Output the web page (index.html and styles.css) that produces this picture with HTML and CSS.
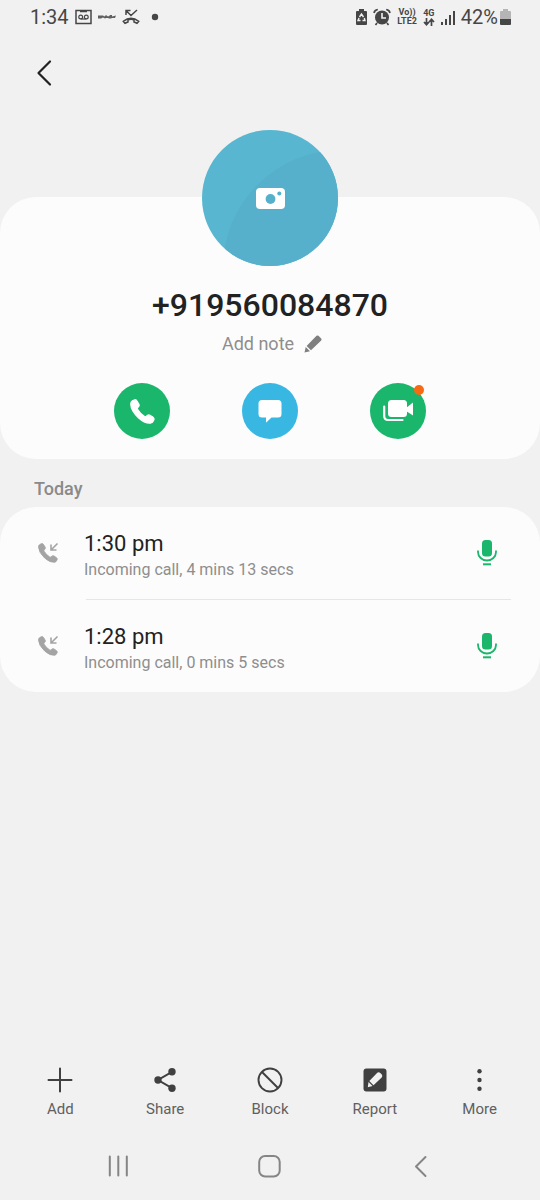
FILE: index.html
```html
<!DOCTYPE html>
<html lang="en">
<head>
<meta charset="utf-8">
<meta name="viewport" content="width=device-width, initial-scale=1">
<title>Call details</title>
<link rel="stylesheet" href="styles.css">
</head>
<body>
<svg class="defs" aria-hidden="true">
  <symbol id="handset" viewBox="0 0 24 24"><path d="M2.200 1.700 4 .9Q5.500.2 6.400 1.500L8.500 4.900Q9.300 6.200 8.200 7.400L7.500 8.200Q6.800 9 7.300 9.900 9.600 14 14 16.700 15 17.300 15.700 16.600L16.600 15.800Q17.900 14.800 19.200 15.600L22.200 17.600Q23.600 18.700 22.900 20.200L22.100 21.500Q21.400 22.800 20 23.100 14.500 23.900 8 18 .8 11 .7 5 .6 2.500 2.200 1.700Z" fill="currentColor" stroke="currentColor" stroke-width="1.100" stroke-linejoin="round"/></symbol>
  <symbol id="incoming" viewBox="0 0 22 22"><svg x="1" y="1" width="20" height="20" viewBox="0 0 24 24"><path d="M2.200 1.700 4 .9Q5.500.2 6.400 1.500L8.500 4.900Q9.300 6.200 8.200 7.400L7.500 8.200Q6.800 9 7.300 9.900 9.600 14 14 16.700 15 17.300 15.700 16.600L16.600 15.800Q17.900 14.800 19.200 15.600L22.200 17.600Q23.600 18.700 22.900 20.200L22.100 21.500Q21.400 22.800 20 23.100 14.500 23.900 8 18 .8 11 .7 5 .6 2.500 2.200 1.700Z" fill="currentColor" stroke="currentColor" stroke-width="1.100" stroke-linejoin="round"/></svg><path d="M20.500 1.500 14 8M14 2.500V8H19.500" fill="none" stroke="currentColor" stroke-width="1.600"/></symbol>
  <symbol id="mic" viewBox="0 0 20 26"><rect x="5" y="0" width="10" height="16.500" rx="3.500" fill="currentColor"/><path d="M1 10.500V12A9 8.500 0 0 0 19 12V10.500" fill="none" stroke="currentColor" stroke-width="1.800"/><path d="M6 24.300H14" stroke="currentColor" stroke-width="2"/></symbol>
</svg>
<div class="screen">
  <div class="status">
    <div class="status-group">
      <span class="clock">1:34</span>
      <svg width="17" height="16" viewBox="0 0 17 16" fill="none" stroke="currentColor"><rect x="1" y="1.500" width="15" height="13" stroke-width="1.500"/><path d="M5 2.500H12" stroke-width="1.500"/><circle cx="5.700" cy="8" r="1.900" stroke-width="1.200"/><circle cx="11.300" cy="8" r="1.900" stroke-width="1.200"/><path d="M5.700 10H11.300" stroke-width="1.200"/></svg>
      <svg width="18" height="6" viewBox="0 0 18 6" fill="currentColor"><path d="M0 1.500H5L6.500 2.500 8 1 9.500 2.200H11L12 1H14V2.500L18 1.500 17 4H14L13 4.500H11L10 4H8L7 4.500 5 3.500 3 4.500H0Z" opacity=".85"/></svg>
      <svg width="18" height="16" viewBox="0 0 18 16" fill="none" stroke="currentColor" stroke-width="1.500"><path d="M4 1.500 9 6.500 15 1M4 6V1.500H8.500"/><path d="M1.300 12.300Q9 6 16.700 12.300L15 14.300 12 13V10.700Q9 9.700 6 10.700V13L3 14.300Z"/></svg>
      <svg width="8" height="8" viewBox="0 0 8 8"><circle cx="4" cy="4" r="3.200" fill="currentColor"/></svg>
    </div>
    <div class="status-group">
      <svg width="11" height="16" viewBox="0 0 11 16"><path d="M3 0H8V2H10Q11 2 11 3V15Q11 16 10 16H1Q0 16 0 15V3Q0 2 1 2H3Z" fill="currentColor"/><path d="M3.500 8 5.500 5 7.500 8M8.300 9 9 11.500H6.500M4.500 11.500H2L3 9" fill="none" stroke="#f1f1f1" stroke-width="1.400"/></svg>
      <svg width="18" height="18" viewBox="0 0 18 18"><circle cx="9" cy="9.500" r="7" fill="currentColor"/><path d="M1 5Q1.500 2 4.800 1.500M17 5Q16.500 2 13.200 1.500M4 15 2.500 17M14 15 15.500 17" fill="none" stroke="currentColor" stroke-width="1.700"/><path d="M9 5V10H13" fill="none" stroke="#f1f1f1" stroke-width="1.600"/></svg>
      <span class="tiny"><span>Vo))</span><span>LTE2</span></span>
      <span class="tiny"><span>4G</span><svg width="12" height="8" viewBox="0 0 12 8" fill="none" stroke="currentColor" stroke-width="1.700"><path d="M3.500 0V6.500M1 4 3.500 6.700 6 4M8.500 8V1.500M6.200 4 8.500 1.300 11 4"/></svg></span>
      <svg width="14" height="15" viewBox="0 0 14 15" fill="currentColor"><path d="M0 12H2V15H0ZM4 9H6V15H4ZM8 5H10V15H8ZM12 1H14V15H12Z"/></svg>
      <span class="battery"><span class="clock">42%</span>
      <svg width="11" height="16" viewBox="0 0 11 16"><path d="M3 0H8V2H10Q11 2 11 3V10H0V3Q0 2 1 2H3Z" fill="#b5b5b5"/><path d="M0 10H11V15Q11 16 10 16H1Q0 16 0 15Z" fill="currentColor"/></svg></span>
    </div>
  </div>

  <header class="header">
    <button class="back" aria-label="Back"><svg width="16" height="28" viewBox="0 0 16 28"><path d="M14 2.500 2.500 14 14 25.500" fill="none" stroke="currentColor" stroke-width="2.200" stroke-linecap="round" stroke-linejoin="round"/></svg></button>
  </header>

  <main class="main">
    <section class="card profile">
      <button class="avatar" aria-label="Add photo">
        <svg viewBox="0 0 136 136"><circle cx="139" cy="138" r="118" fill="#57b0cb"/><rect x="54" y="58" width="29" height="21" rx="4" fill="#fff"/><circle cx="68.500" cy="69" r="4.900" fill="#57b0cb"/><circle cx="77.300" cy="63.500" r="2" fill="#57b0cb"/></svg>
      </button>
      <h1 class="number">+919560084870</h1>
      <button class="note">Add note
        <svg width="18" height="18" viewBox="0 0 18 18" fill="currentColor"><path d="M12.500.8Q13.500 0 14.500.8L17.200 3.500Q18 4.500 17.200 5.500L7 15.300 2.600 11ZM1.700 12 6 16.300.5 17.500Z"/></svg>
      </button>
      <div class="actions">
        <button class="action" aria-label="Call"><svg width="25" height="25"><use href="#handset"/></svg></button>
        <button class="action message" aria-label="Message"><svg width="24" height="24" viewBox="0 0 24 24"><path d="M4 1H20Q23.500 1 23.500 4.500V15Q23.500 18.500 20 18.500H13.500L8.500 23.300Q8 23.700 8 23V18.500H4Q.5 18.500.5 15V4.500Q.5 1 4 1Z" fill="currentColor"/></svg></button>
        <button class="action" aria-label="Video call"><svg width="32" height="24" viewBox="0 0 32 24"><rect x="6" y="1" width="19" height="17" rx="3.500" fill="currentColor"/><path d="M24 9 31 3.500V16.500L24 12Z" fill="currentColor"/><path d="M2.200 7.500V17Q2.200 21 6.200 21H20.500" fill="none" stroke="currentColor" stroke-width="2.200" stroke-linecap="round"/></svg><span class="badge"></span></button>
      </div>
    </section>

    <h2 class="day">Today</h2>
    <ul class="card calls">
      <li class="call">
        <svg class="call-icon" aria-hidden="true"><use href="#incoming"/></svg>
        <div class="call-body"><span class="time">1:30 pm</span><span class="detail">Incoming call, 4 mins 13 secs</span></div>
        <button class="record" aria-label="Play recording"><svg width="20" height="26"><use href="#mic"/></svg></button>
      </li>
      <li class="call">
        <svg class="call-icon" aria-hidden="true"><use href="#incoming"/></svg>
        <div class="call-body"><span class="time">1:28 pm</span><span class="detail">Incoming call, 0 mins 5 secs</span></div>
        <button class="record" aria-label="Play recording"><svg width="20" height="26"><use href="#mic"/></svg></button>
      </li>
    </ul>
  </main>

  <div class="toolbar">
    <button class="tool"><svg viewBox="0 0 26 26" fill="none" stroke="currentColor" stroke-width="2" stroke-linecap="round"><path d="M13 1.500V24.500M1.500 13H24.500"/></svg>Add</button>
    <button class="tool"><svg viewBox="0 0 26 26" fill="currentColor"><path d="M20 4.800 6 13 20 21.200" fill="none" stroke="currentColor" stroke-width="2"/><circle cx="20" cy="4.800" r="3.700"/><circle cx="6" cy="13" r="3.700"/><circle cx="20" cy="21.200" r="3.700"/></svg>Share</button>
    <button class="tool"><svg viewBox="0 0 26 26" fill="none" stroke="currentColor" stroke-width="1.900"><circle cx="13" cy="13" r="11.500"/><path d="M5 5 21 21"/></svg>Block</button>
    <button class="tool"><svg viewBox="0 0 26 26"><rect x="1.500" y="1.500" width="23" height="23" rx="3" fill="currentColor"/><path d="M14.800 6.200Q16.500 4.500 18.300 6L19.800 7.500Q21 9 19.700 10.500L11.500 18.200 7.300 14ZM6.500 15 10.500 19 5.800 20.200Z" fill="#f1f1f1"/></svg>Report</button>
    <button class="tool"><svg viewBox="0 0 26 26" fill="currentColor"><circle cx="12.500" cy="4.300" r="2.200"/><circle cx="12.500" cy="13" r="2.200"/><circle cx="12.500" cy="21.700" r="2.200"/></svg>More</button>
  </div>

  <nav class="system" aria-label="System">
    <button aria-label="Recent apps"><svg viewBox="0 0 24 24"><path d="M2.800 2.500V21.500M11.300 2.500V21.500M19.800 2.500V21.500"/></svg></button>
    <button aria-label="Home"><svg viewBox="0 0 24 24"><rect x="1.200" y="2" width="20.500" height="20.500" rx="6"/></svg></button>
    <button aria-label="Go back"><svg viewBox="0 0 24 24"><path d="M16.500 3 7 12.500 16.500 22"/></svg></button>
  </nav>
</div>
</body>
</html>
```
FILE: styles.css
```css
* { box-sizing: border-box; }
body { margin: 0; background: #f1f1f1; color: #222; font-family: Roboto, "Liberation Sans", sans-serif; }
button { border: 0; padding: 0; background: none; color: inherit; font: inherit; cursor: pointer; }
svg { display: block; flex: none; }
.defs { position: absolute; width: 0; height: 0; }
.screen { min-height: 100vh; display: flex; flex-direction: column; }

.status { display: flex; justify-content: space-between; height: 34px; padding: 0 29px 0 30px; color: #464646; }
.status-group { display: flex; align-items: center; gap: 6px; }
.status-group > svg:last-child { margin-left: 5px; }
.clock { font-size: 20px; line-height: 34px; }
.tiny { display: flex; flex-direction: column; align-items: center; font-size: 9px; font-weight: 700; line-height: 9px; }
.battery { display: flex; align-items: center; gap: 2px; }

.header { height: 95px; padding: 19px 24px; }
.back { display: grid; place-items: center; width: 40px; height: 40px; color: #222; }

.main { flex: 1; }
.card { background: #fcfcfc; border-radius: 36px; }
.profile { display: flex; flex-direction: column; align-items: center; margin-top: 68px; padding-bottom: 20px; }
.avatar { width: 136px; height: 136px; margin-top: -67px; border-radius: 50%; overflow: hidden; background: #58b6d0; }
.avatar svg { width: 100%; height: 100%; }
.number { margin: 20px 0 0; font-size: 32px; line-height: 38px; font-weight: 500; }
.note { display: flex; align-items: center; gap: 10px; margin-top: 8px; padding-left: 4px; color: #8e8e8e; font-size: 18px; line-height: 24px; }
.note svg { color: #808080; }
.actions { display: flex; gap: 72px; margin-top: 27px; }
.action { position: relative; display: grid; place-items: center; width: 56px; height: 56px; border-radius: 50%; background: #19b66b; color: #fff; }
.message { background: #38b7e3; }
.badge { position: absolute; top: 2px; right: 2px; width: 10px; height: 10px; border-radius: 50%; background: #f86a12; }

.day { margin: 0; padding: 18px 34px 6px; font-size: 18px; line-height: 24px; font-weight: 500; color: #8a8a8a; }
.calls { margin: 0; padding: 0; list-style: none; }
.call { position: relative; display: flex; align-items: center; height: 92px; padding: 0 40px 0 37px; }
.call + .call { height: 93px; padding-top: 1px; }
.call + .call::before { content: ""; position: absolute; top: 0; left: 86px; right: 29px; height: 1px; background: #e6e6e6; }
.call-icon { width: 22px; height: 22px; color: #a4a4a4; }
.call-body { flex: 1; display: flex; flex-direction: column; margin-left: 25px; padding-top: 6px; }
.time { font-size: 22px; line-height: 28px; }
.detail { font-size: 16px; line-height: 24px; color: #8e8e8e; }
.record { display: grid; place-items: center; width: 26px; height: 40px; color: #19b66b; }

.toolbar { display: grid; grid-template-columns: repeat(5, 1fr); padding: 0 8px; }
.tool { display: flex; flex-direction: column; align-items: center; gap: 7px; color: #606060; font-size: 15px; line-height: 18px; }
.tool svg { width: 26px; height: 26px; color: #404040; }
.system { display: grid; grid-template-columns: repeat(3, 1fr); padding: 36px 43px 22px; }
.system button { display: grid; place-items: center; }
.system svg { width: 24px; height: 24px; fill: none; stroke: #858585; stroke-width: 2; stroke-linecap: round; stroke-linejoin: round; }
```
